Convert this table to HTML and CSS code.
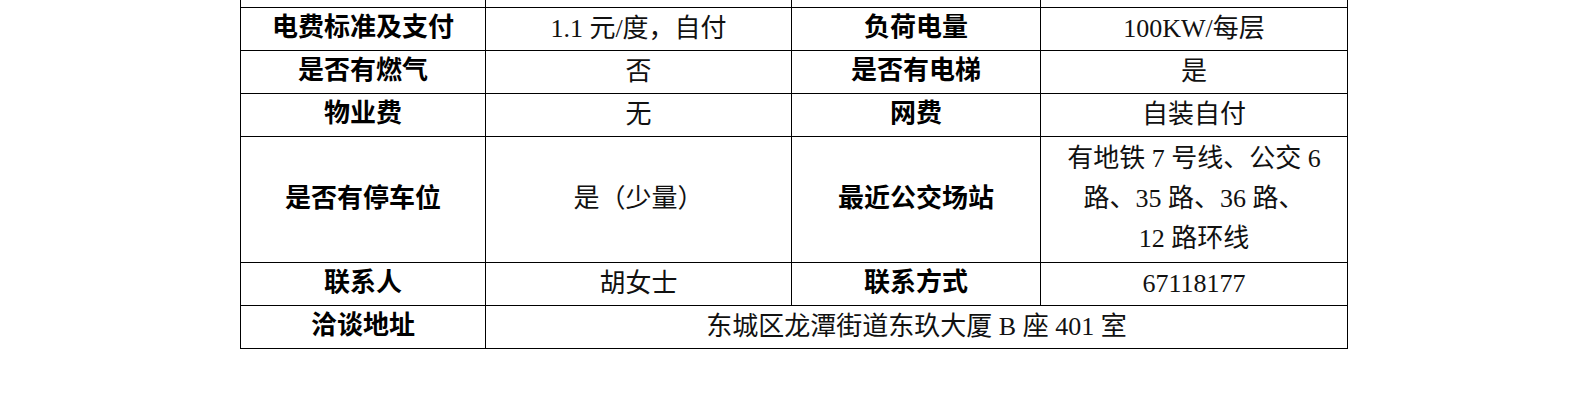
FILE: index.html
```html
<!DOCTYPE html>
<html lang="zh-CN">
<head>
<meta charset="utf-8">
<title>租赁信息表</title>
<link rel="stylesheet" href="styles.css">
</head>
<body>
<div class="page">
  <table class="info">
    <colgroup>
      <col class="c1"><col class="c2"><col class="c3"><col class="c4">
    </colgroup>
    <tr class="cut"><td></td><td></td><td></td><td></td></tr>
    <tr>
      <th>电费标准及支付</th>
      <td>1.1 元/度，自付</td>
      <th>负荷电量</th>
      <td>100KW/每层</td>
    </tr>
    <tr>
      <th>是否有燃气</th>
      <td>否</td>
      <th>是否有电梯</th>
      <td>是</td>
    </tr>
    <tr>
      <th>物业费</th>
      <td>无</td>
      <th>网费</th>
      <td>自装自付</td>
    </tr>
    <tr class="tall">
      <th>是否有停车位</th>
      <td>是（少量）</td>
      <th>最近公交场站</th>
      <td class="multi">有地铁 7 号线、公交 6<br>路、35 路、36 路、<br>12 路环线</td>
    </tr>
    <tr>
      <th>联系人</th>
      <td>胡女士</td>
      <th>联系方式</th>
      <td>67118177</td>
    </tr>
    <tr>
      <th>洽谈地址</th>
      <td colspan="3">东城区龙潭街道东玖大厦 B 座 401 室</td>
    </tr>
  </table>
</div>
</body>
</html>
```

FILE: styles.css
```css
html, body {
  margin: 0;
  padding: 0;
  background: #ffffff;
}

.page {
  width: 1587px;
  height: 406px;
  overflow: hidden;
}

.info {
  border-collapse: collapse;
  table-layout: fixed;
  width: 1107px;
  margin: 0 auto 0 240px;
  font-family: "Liberation Serif", "Noto Sans CJK SC", serif;
  font-size: 26px;
  color: #000;
}

.c1 { width: 245px; }
.c2 { width: 306px; }
.c3 { width: 249px; }
.c4 { width: 307px; }

.info th,
.info td {
  border: 1px solid #000;
  padding: 0 4px;
  text-align: center;
  vertical-align: middle;
  line-height: 30px;
  height: 43px;
  box-sizing: border-box;
  white-space: nowrap;
}

.info th {
  font-family: "Noto Sans CJK SC", sans-serif;
  font-weight: 700;
  padding-bottom: 7px;
}

.info td {
  font-weight: 400;
  color: #111;
}

.info tr.cut td {
  height: 7px;
  border-top: none;
  padding: 0;
  line-height: 0;
}

.info tr.tall th,
.info tr.tall td {
  height: 126px;
}

.info td.multi {
  line-height: 40px;
}
```
